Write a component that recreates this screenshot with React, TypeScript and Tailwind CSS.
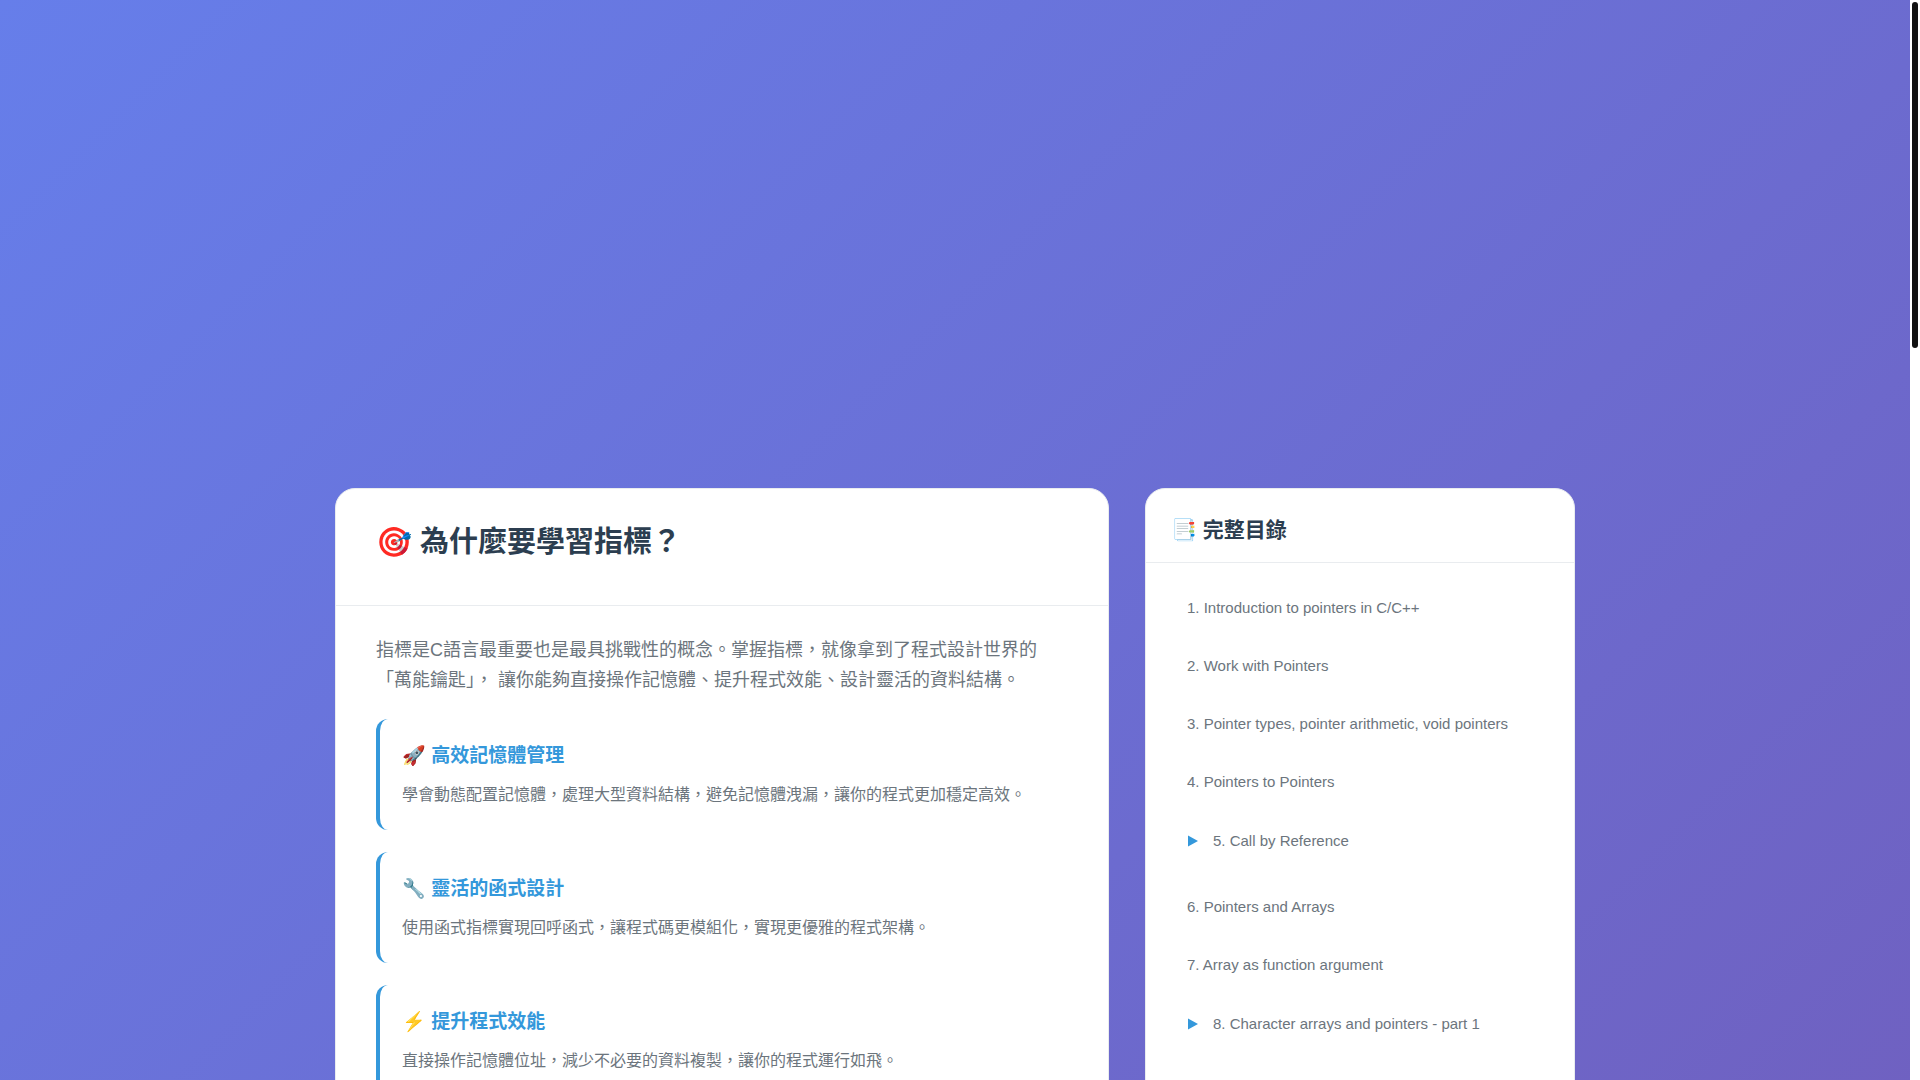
import React from 'react'

type Feature = { icon: string; title: string; text: string }
type Chapter = { title: string; href: string; expandable?: boolean }

const features: Feature[] = [
  { icon: '🚀', title: '高效記憶體管理', text: '學會動態配置記憶體，處理大型資料結構，避免記憶體洩漏，讓你的程式更加穩定高效。' },
  { icon: '🔧', title: '靈活的函式設計', text: '使用函式指標實現回呼函式，讓程式碼更模組化，實現更優雅的程式架構。' },
  { icon: '⚡', title: '提升程式效能', text: '直接操作記憶體位址，減少不必要的資料複製，讓你的程式運行如飛。' },
]

const chapters: Chapter[] = [
  { title: '1. Introduction to pointers in C/C++', href: '#ch1' },
  { title: '2. Work with Pointers', href: '#ch2' },
  { title: '3. Pointer types, pointer arithmetic, void pointers', href: '#ch3' },
  { title: '4. Pointers to Pointers', href: '#ch4' },
  { title: '5. Call by Reference', href: '#ch5', expandable: true },
  { title: '6. Pointers and Arrays', href: '#ch6' },
  { title: '7. Array as function argument', href: '#ch7' },
  { title: '8. Character arrays and pointers - part 1', href: '#ch8', expandable: true },
]

const cardClass = 'bg-white border border-[#e9ecef] rounded-[20px] overflow-hidden'

const FeatureCard = ({ icon, title, text }: Feature) => (
  <li className="border-l-4 border-[#3498db] rounded-xl p-[22px]">
    <h3 className="text-[19px] leading-[30px] font-bold text-[#3498db] mb-[10px]">
      {icon} {title}
    </h3>
    <p className="text-base leading-[27px]">{text}</p>
  </li>
)

const ChapterItem = ({ title, href, expandable }: Chapter) => {
  if (expandable) {
    return (
      <li className="mb-[7px]">
        <details>
          <summary className="flex items-center gap-[15px] h-[60px] px-4 cursor-pointer list-none">
            <svg viewBox="0 0 10 12" className="w-[10px] h-3 ml-px fill-[#3498db]" aria-hidden="true">
              <path d="M0 0.5 L10 6 L0 11.5 Z" />
            </svg>
            {title}
          </summary>
        </details>
      </li>
    )
  }

  return (
    <li>
      <a href={href} className="flex items-center h-[58px] px-4">
        {title}
      </a>
    </li>
  )
}

const App = () => {
  return (
    <div className="flex h-screen overflow-hidden bg-white text-[#6c757d] font-['Liberation_Sans','Noto_Sans_CJK_TC',sans-serif]">
      <main
        lang="zh-TW"
        className="flex-1 min-w-0 overflow-y-auto [scrollbar-width:none] bg-[linear-gradient(135deg,#667eea_0%,#764ba2_100%)] bg-[length:100%_3370px] bg-no-repeat pt-[488px]"
      >
        <div className="max-w-[1240px] mx-auto grid grid-cols-[1.8fr_1fr] gap-9">
          {/* Why learn pointers */}
          <section className={cardClass}>
            <div className="px-10 pt-[33px] pb-[43px] border-b border-[#e9ecef]">
              <h2 className="text-[29px] leading-10 font-bold text-[#2c3e50]">🎯 為什麼要學習指標？</h2>
            </div>
            <div className="px-10 pt-[29px] pb-10">
              <p className="text-lg leading-[30px] mb-6">
                指標是C語言最重要也是最具挑戰性的概念。掌握指標，就像拿到了程式設計世界的「萬能鑰匙」， 讓你能夠直接操作記憶體、提升程式效能、設計靈活的資料結構。
              </p>
              <ul className="flex flex-col gap-[22px]">
                {features.map((feature) => (
                  <FeatureCard key={feature.title} {...feature} />
                ))}
              </ul>
            </div>
          </section>

          {/* Table of contents */}
          <nav className={cardClass} aria-labelledby="toc-title">
            <div className="px-[25px] pt-[25px] pb-4 border-b border-[#e9ecef]">
              <h2 id="toc-title" className="text-[21px] leading-8 font-bold text-[#2c3e50]">
                📑 完整目錄
              </h2>
            </div>
            <ol className="px-[25px] py-4 text-[15px]">
              {chapters.map((chapter) => (
                <ChapterItem key={chapter.title} {...chapter} />
              ))}
            </ol>
          </nav>
        </div>
      </main>

      {/* Scroll indicator */}
      <div className="w-[10px] shrink-0 pl-[2px] pt-[2px]" aria-hidden="true">
        <div className="w-[6px] h-[32vh] rounded-full bg-[#111111]"></div>
      </div>
    </div>
  )
}

export default App
